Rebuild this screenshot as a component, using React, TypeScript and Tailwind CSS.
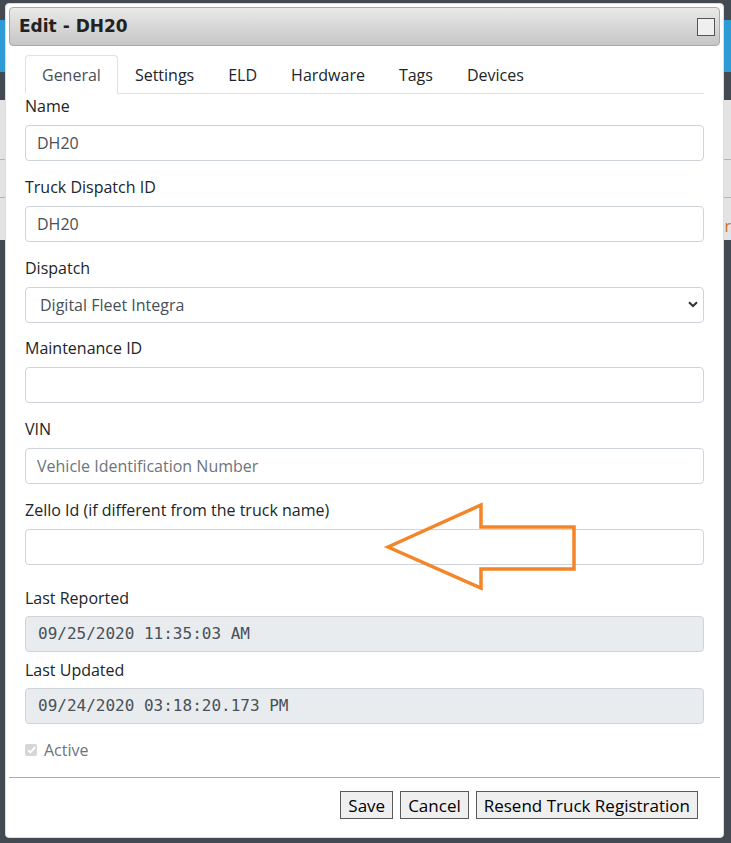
import React from "react";

const fields = [
  { label: "Name", value: "DH20" },
  { label: "Truck Dispatch ID", value: "DH20" },
];

const tabs = ["General", "Settings", "ELD", "Hardware", "Tags", "Devices"];

function TextInput({ value, placeholder }: { value?: string; placeholder?: string }) {
  return (
    <input
      readOnly
      value={value ?? ""}
      placeholder={placeholder}
      className="block h-[36px] w-full rounded border border-[#ced4da] bg-white px-[11px] text-[16px] text-[#495057] outline-none placeholder:text-[#6c757d]"
    />
  );
}

function Label({ children, mb = "mb-[7px]" }: { children: React.ReactNode; mb?: string }) {
  return <label className={`block text-[16px] leading-6 text-[#212529] ${mb}`}>{children}</label>;
}

function Stamp({ value }: { value: string }) {
  return (
    <div className="flex h-[36px] w-full items-center rounded border border-[#ced4da] bg-[#e9ecef] px-[12px] font-['DejaVu_Sans_Mono',monospace] text-[16px] text-[#495057]">
      {value}
    </div>
  );
}

export default function App() {
  return (
    <div className="relative h-[843px] w-full overflow-hidden bg-[#444a52] font-['Open_Sans',sans-serif]">
      {/* page behind the overlay */}
      <div className="h-5" />
      <div className="h-[52px] bg-[#2f9bd6]" />
      <div className="h-7" />
      <div className="flex h-[140px] flex-col bg-[#e3e3e3]">
        <div className="h-[60px] border-b border-[#b4b4b4]" />
        <div className="h-[38px] border-b border-[#b4b4b4]" />
        <div className="flex flex-1 items-end justify-end pb-[2px] text-[16px] text-[#c7701f]">r</div>
      </div>

      {/* dialog */}
      <div className="absolute left-[5px] top-[3px] flex h-[835px] w-[719px] flex-col rounded border border-[#dddddd] bg-white p-[3px]">
        <div className="flex h-[39px] shrink-0 items-center justify-between rounded border border-[#aaaaaa] bg-gradient-to-b from-[#e9e9e9] to-[#c6c6c6] pl-[9px] pr-[4px]">
          <span className="font-['DejaVu_Sans',sans-serif] text-[17px] font-bold text-[#222222]">Edit - DH20</span>
          <span className="h-[18px] w-[18px] border border-[#555555] bg-[#efefef]" />
        </div>

        <div className="flex-1 px-4">
          <div className="mt-[9px] flex border-b border-[#dee2e6]">
            {tabs.map((t, i) => (
              <div
                key={t}
                className={`-mb-px rounded-t border px-4 pb-[6px] pt-[7px] text-[16px] leading-6 ${
                  i === 0 ? "border-[#dee2e6] border-b-white bg-white text-[#495057]" : "border-transparent text-[#212529]"
                }`}
              >
                {t}
              </div>
            ))}
          </div>

          {fields.map((f) => (
            <div key={f.label} className="mb-[13.8px]">
              <Label>{f.label}</Label>
              <TextInput value={f.value} />
            </div>
          ))}

          <div className="mb-[13.8px]">
            <Label>Dispatch</Label>
            <div className="flex h-[36px] w-full items-center justify-between rounded border border-[#ced4da] bg-white pl-[14px] pr-[5px] text-[16px] text-[#495057]">
              <span>Digital Fleet Integra</span>
              <svg width="10" height="7" viewBox="0 0 10 7">
                <path d="M1 1.2 L5 5 L9 1.2" fill="none" stroke="#333" strokeWidth="2" />
              </svg>
            </div>
          </div>

          <div className="mb-[13.8px]">
            <Label>Maintenance ID</Label>
            <TextInput />
          </div>

          <div className="mb-[13.8px]">
            <Label>VIN</Label>
            <TextInput placeholder="Vehicle Identification Number" />
          </div>

          <div className="mb-[21px]">
            <Label>Zello Id (if different from the truck name)</Label>
            <TextInput />
          </div>

          <Label mb="mb-[6px]">Last Reported</Label>
          <Stamp value="09/25/2020 11:35:03 AM" />
          <div className="mt-[6px]">
            <Label mb="mb-[6px]">Last Updated</Label>
            <Stamp value="09/24/2020 03:18:20.173 PM" />
          </div>

          <div className="mt-[14px] flex h-6 items-center gap-[7px] text-[16px] text-[#6c757d]">
            <span className="flex h-[12px] w-[12px] items-center justify-center rounded-[2px] bg-[#d6d6d6]">
              <svg width="9" height="8" viewBox="0 0 9 8">
                <path d="M1 4.2 L3.4 6.4 L8 1.2" fill="none" stroke="#fff" strokeWidth="1.8" />
              </svg>
            </span>
            Active
          </div>
        </div>

        <div className="flex shrink-0 justify-end gap-[7px] border-t border-[#aaaaaa] pb-[15px] pr-[22px] pt-[13px]">
          {["Save", "Cancel", "Resend Truck Registration"].map((b) => (
            <button
              key={b}
              className="h-[28px] border border-[#5a5a5a] bg-[#efefef] px-[7px] text-[17px] leading-none text-black"
            >
              {b}
            </button>
          ))}
        </div>
      </div>

      {/* annotation arrow */}
      <svg className="pointer-events-none absolute left-0 top-0" width="731" height="843">
        <polygon
          points="388,547 481,505 481,527 574,527 574,569 481,569 481,588"
          fill="none"
          stroke="#f58529"
          strokeWidth="3.5"
          strokeLinejoin="miter"
        />
      </svg>
    </div>
  );
}
